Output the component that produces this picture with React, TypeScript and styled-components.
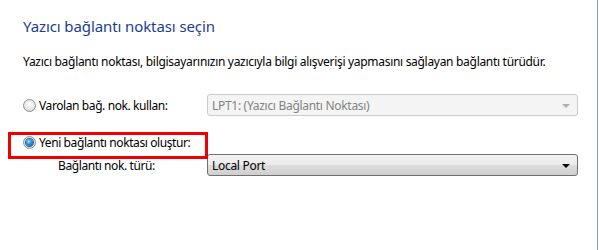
import React from 'react';
import styled, { createGlobalStyle } from 'styled-components';

const GlobalStyle = createGlobalStyle`
  html, body {
    margin: 0;
    padding: 0;
    background: #ffffff;
  }
  body {
    font-family: 'Noto Sans', 'Liberation Sans', sans-serif;
    font-size: 12px;
    color: #000000;
  }
`;

type RadioProps = {
  checked?: boolean;
};

const RadioButton: React.FC<RadioProps> = ({ checked }) => (
  <RadioCircle checked={checked}>{checked && <RadioDot />}</RadioCircle>
);

type ComboProps = {
  value: string;
  disabled?: boolean;
};

const Combo: React.FC<ComboProps> = ({ value, disabled }) => (
  <ComboBox disabled={disabled}>
    <ComboText>{value}</ComboText>
    <Arrow disabled={disabled} />
  </ComboBox>
);

const App: React.FC = () => {
  return (
    <>
      <GlobalStyle />
      <Panel>
        <Title>Yazıcı bağlantı noktası seçin</Title>
        <Description>
          Yazıcı bağlantı noktası, bilgisayarınızın yazıcıyla bilgi alışverişi yapmasını sağlayan
          bağlantı türüdür.
        </Description>
        <Form>
          <Row>
            <Option>
              <RadioButton />
              <span>Varolan bağ. nok. kullan:</span>
            </Option>
            <Combo value="LPT1: (Yazıcı Bağlantı Noktası)" disabled />
          </Row>
          <Row spacing={15}>
            <Option>
              <Highlight />
              <RadioButton checked />
              <span>Yeni bağlantı noktası oluştur:</span>
            </Option>
          </Row>
          <Row spacing={1}>
            <SubLabel>Bağlantı nok. türü:</SubLabel>
            <Combo value="Local Port" />
          </Row>
        </Form>
      </Panel>
    </>
  );
};

export default App;

const Panel = styled.div`
  box-sizing: border-box;
  width: 598px;
  height: 250px;
  padding: 16px 0 0 23px;
  border-right: 1px solid #8ba1bb;
`;

const Title = styled.h1`
  margin: 0;
  font-size: 15px;
  line-height: 20px;
  font-weight: normal;
  color: #1c3d94;
  letter-spacing: -0.1px;
`;

const Description = styled.p`
  margin: 18px 0 0;
  font-size: 12px;
  line-height: 16px;
  white-space: nowrap;
  letter-spacing: -0.3px;
`;

const Form = styled.div`
  display: flex;
  flex-direction: column;
  margin-top: 24px;
`;

const Row = styled.div<{ spacing?: number }>`
  display: grid;
  grid-template-columns: 184px 371px;
  align-items: center;
  height: 22px;
  margin-top: ${(p) => p.spacing ?? 0}px;
`;

const Option = styled.label`
  position: relative;
  display: flex;
  align-items: center;
  gap: 3px;
  white-space: nowrap;
  letter-spacing: -0.4px;
`;

const Highlight = styled.span`
  position: absolute;
  left: -15px;
  top: -2px;
  width: 200px;
  height: 27px;
  box-sizing: border-box;
  border: 3px solid #f00000;
  pointer-events: none;
`;

const SubLabel = styled.span`
  padding-left: 35px;
  white-space: nowrap;
  letter-spacing: -0.4px;
`;

const RadioCircle = styled.span<{ checked?: boolean }>`
  box-sizing: border-box;
  width: 13px;
  height: 13px;
  flex: none;
  border-radius: 50%;
  border: 1px solid #8e8f8f;
  background: radial-gradient(circle at 50% 40%, #ffffff 0%, #e6e6e6 60%, #cfcfcf 100%);
  display: flex;
  align-items: center;
  justify-content: center;
`;

const RadioDot = styled.span`
  width: 7px;
  height: 7px;
  border-radius: 50%;
  background: radial-gradient(circle at 40% 35%, #9ee3ff 0%, #2b8fd6 45%, #0b3f7a 100%);
  box-shadow: 0 0 0 1px #1d5f9e;
`;

const ComboBox = styled.div<{ disabled?: boolean }>`
  box-sizing: border-box;
  height: 22px;
  display: flex;
  align-items: center;
  justify-content: space-between;
  padding: 0 7px 0 4px;
  border-radius: 3px;
  border: 1px solid ${(p) => (p.disabled ? '#c9cccf' : '#707070')};
  background: ${(p) =>
    p.disabled
      ? '#f4f4f4'
      : 'linear-gradient(to bottom, #f2f2f2 0%, #ebebeb 50%, #dddddd 51%, #cfcfcf 100%)'};
  color: ${(p) => (p.disabled ? '#838383' : '#000000')};
`;

const ComboText = styled.span`
  white-space: nowrap;
  letter-spacing: -0.3px;
`;

const Arrow = styled.span<{ disabled?: boolean }>`
  width: 0;
  height: 0;
  border-left: 4px solid transparent;
  border-right: 4px solid transparent;
  border-top: 4px solid ${(p) => (p.disabled ? '#b0b0b0' : '#000000')};
  margin-top: 1px;
`;
